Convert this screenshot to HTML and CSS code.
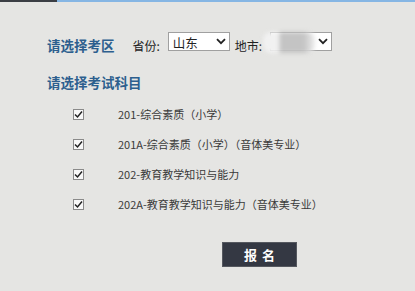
FILE: index.html
```html
<!DOCTYPE html>
<html lang="zh-CN">
<head>
    <meta charset="UTF-8">
    <title>报名</title>
    <link rel="stylesheet" href="styles.css">
</head>
<body>
    <div class="top-bar">
        <div class="top-bar-dark"></div>
        <div class="top-bar-blue"></div>
    </div>

    <div class="content">
        <div class="area-row">
            <span class="section-title">请选择考区</span>
            <span class="field-label">省份:</span>
            <span class="select-wrap">
                <select class="select">
                    <option>山东</option>
                </select>
                <svg class="chevron" width="10" height="7" viewBox="0 0 10 7"><path d="M1 1.2 L5 5.2 L9 1.2" fill="none" stroke="#222" stroke-width="1.8"/></svg>
            </span>
            <span class="field-label">地市:</span>
            <span class="select-wrap">
                <select class="select">
                    <option></option>
                </select>
                <svg class="chevron" width="10" height="7" viewBox="0 0 10 7"><path d="M1 1.2 L5 5.2 L9 1.2" fill="none" stroke="#222" stroke-width="1.8"/></svg>
                <span class="blur-mask"></span>
            </span>
        </div>

        <div class="section-title subject-title">请选择考试科目</div>

        <ul class="subject-list">
            <li class="subject"><span class="check"><svg width="9" height="9" viewBox="0 0 9 9"><path d="M1 4.5 L3.5 7 L8 1.5" fill="none" stroke="#222" stroke-width="1.5"/></svg></span>201-综合素质（小学）</li>
            <li class="subject"><span class="check"><svg width="9" height="9" viewBox="0 0 9 9"><path d="M1 4.5 L3.5 7 L8 1.5" fill="none" stroke="#222" stroke-width="1.5"/></svg></span>201A-综合素质（小学）（音体美专业）</li>
            <li class="subject"><span class="check"><svg width="9" height="9" viewBox="0 0 9 9"><path d="M1 4.5 L3.5 7 L8 1.5" fill="none" stroke="#222" stroke-width="1.5"/></svg></span>202-教育教学知识与能力</li>
            <li class="subject"><span class="check"><svg width="9" height="9" viewBox="0 0 9 9"><path d="M1 4.5 L3.5 7 L8 1.5" fill="none" stroke="#222" stroke-width="1.5"/></svg></span>202A-教育教学知识与能力（音体美专业）</li>
        </ul>

        <div class="actions">
            <button class="submit-btn">报名</button>
        </div>
    </div>
</body>
</html>
```

FILE: styles.css
```css
body {
    margin: 0;
    background-color: #e5e5e3;
    font-family: 'Noto Sans CJK SC', 'Liberation Sans', sans-serif;
    color: #333;
    height: 291px;
    overflow: hidden;
}

.top-bar {
    display: flex;
    height: 2px;
}

.top-bar-dark {
    width: 57px;
    background-color: #3b3e44;
}

.top-bar-blue {
    flex: 1;
    background-color: #86b6e4;
}

.content {
    padding: 29px 0 0 47px;
}

.area-row {
    display: flex;
    align-items: center;
    height: 26px;
}

.section-title {
    font-size: 13.5px;
    font-weight: bold;
    color: #2d5f8e;
    line-height: 20px;
}

.area-row .section-title {
    margin-top: 2px;
}

.field-label {
    font-size: 12px;
    color: #222;
    margin-left: 18px;
    margin-right: 8px;
    margin-top: 2px;
}

.area-row .select-wrap + .field-label {
    margin-left: 5px;
}

.select-wrap {
    position: relative;
    display: block;
    height: 19px;
    margin-bottom: 6px;
}

.select {
    display: block;
    appearance: none;
    -webkit-appearance: none;
    width: 62px;
    height: 19px;
    margin: 0;
    padding: 0 0 0 4px;
    border: 1px solid #a0a0a0;
    border-radius: 0;
    background-color: #fff;
    font-family: 'Noto Sans CJK SC', sans-serif;
    font-size: 12.5px;
    color: #222;
}

.chevron {
    position: absolute;
    right: 4px;
    top: 6px;
    pointer-events: none;
}

.blur-mask {
    position: absolute;
    left: -7px;
    top: 0;
    width: 52px;
    height: 21px;
    background: linear-gradient(to right, #f1f1f1 0, #f1f1f1 30%, #c4c4c4 33%, #c4c4c4 78%, #eeeeee 100%);
    border-radius: 8px;
    filter: blur(2px);
}

.subject-title {
    margin-top: 15px;
}

.subject-list {
    list-style: none;
    margin: 7px 0 0 26px;
    padding: 0;
}

.subject {
    display: flex;
    align-items: center;
    height: 30px;
    font-size: 11px;
    color: #3a3a3a;
}

.check {
    display: flex;
    align-items: center;
    justify-content: center;
    width: 11px;
    height: 11px;
    border: 1px solid #8a8a8a;
    background-color: #f8f8f8;
    margin-right: 34px;
    box-sizing: border-box;
}

.actions {
    margin: 23px 0 0 175px;
}

.submit-btn {
    display: block;
    width: 75px;
    height: 25px;
    border: 1px solid #55585f;
    background-color: #343843;
    color: #fff;
    font-family: 'Noto Sans CJK SC', sans-serif;
    font-size: 13px;
    font-weight: bold;
    letter-spacing: 5px;
    padding: 0 0 0 5px;
}
```
